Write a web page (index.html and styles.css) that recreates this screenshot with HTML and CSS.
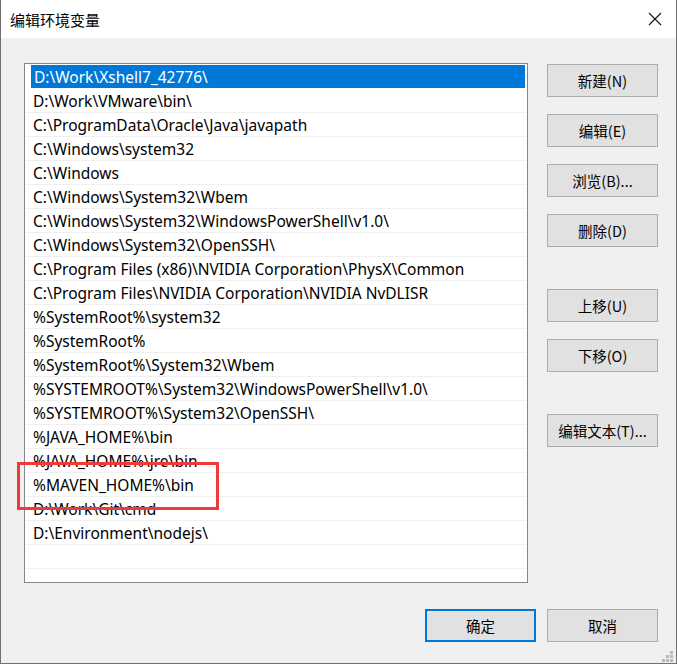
FILE: index.html
```html
<!DOCTYPE html>
<html lang="zh-CN">
<head>
<meta charset="utf-8">
<title>编辑环境变量</title>
<link rel="stylesheet" href="styles.css">
</head>
<body>
<div class="window">
  <div class="titlebar">
    <span class="title">编辑环境变量</span>
    <span class="close">
      <svg width="14" height="14" viewBox="0 0 14 14"><path d="M1 1 L13 13 M13 1 L1 13" stroke="#111" stroke-width="1.1" fill="none"/></svg>
    </span>
  </div>
  <div class="content">
    <div class="main">
      <div class="listbox">
        <div class="row selected">D:\Work\Xshell7_42776\</div>
        <div class="row">D:\Work\VMware\bin\</div>
        <div class="row">C:\ProgramData\Oracle\Java\javapath</div>
        <div class="row">C:\Windows\system32</div>
        <div class="row">C:\Windows</div>
        <div class="row">C:\Windows\System32\Wbem</div>
        <div class="row">C:\Windows\System32\WindowsPowerShell\v1.0\</div>
        <div class="row">C:\Windows\System32\OpenSSH\</div>
        <div class="row">C:\Program Files (x86)\NVIDIA Corporation\PhysX\Common</div>
        <div class="row">C:\Program Files\NVIDIA Corporation\NVIDIA NvDLISR</div>
        <div class="row">%SystemRoot%\system32</div>
        <div class="row">%SystemRoot%</div>
        <div class="row">%SystemRoot%\System32\Wbem</div>
        <div class="row">%SYSTEMROOT%\System32\WindowsPowerShell\v1.0\</div>
        <div class="row">%SYSTEMROOT%\System32\OpenSSH\</div>
        <div class="row">%JAVA_HOME%\bin</div>
        <div class="row">%JAVA_HOME%\jre\bin</div>
        <div class="row">%MAVEN_HOME%\bin</div>
        <div class="row">D:\Work\Git\cmd</div>
        <div class="row">D:\Environment\nodejs\</div>
        <div class="row empty"></div>
        <div class="row empty"></div>
      </div>
      <div class="side">
        <div class="group">
          <button class="btn">新建(N)</button>
          <button class="btn">编辑(E)</button>
          <button class="btn">浏览(B)...</button>
          <button class="btn">删除(D)</button>
        </div>
        <div class="group">
          <button class="btn">上移(U)</button>
          <button class="btn">下移(O)</button>
        </div>
        <div class="group">
          <button class="btn">编辑文本(T)...</button>
        </div>
      </div>
    </div>
    <div class="footer">
      <button class="btn default">确定</button>
      <button class="btn">取消</button>
    </div>
    <div class="grip">
      <i></i><i></i><i></i><i></i><i></i><i></i><i></i><i></i><i></i>
    </div>
  </div>
  <div class="highlight"></div>
</div>
</body>
</html>
```
FILE: styles.css
```css
* { box-sizing: border-box; }
html, body {
  margin: 0;
  padding: 0;
  width: 677px;
  height: 664px;
  overflow: hidden;
  background: #f0f0f0;
}
body {
  font-family: "Noto Sans", "Noto Sans CJK SC", sans-serif;
  font-size: 15px;
  color: #000;
}
.window {
  position: relative;
  width: 677px;
  height: 664px;
  border-left: 1px solid #707070;
  border-right: 1px solid #707070;
  border-bottom: 1px solid #707070;
  display: flex;
  flex-direction: column;
  background: #f0f0f0;
}
.titlebar {
  height: 38px;
  background: #fff;
  display: flex;
  align-items: center;
  justify-content: space-between;
  padding-left: 9px;
  padding-right: 14px;
  flex: none;
}
.title {
  font-family: "Noto Sans CJK SC", sans-serif;
  font-size: 15px;
  line-height: 20px;
  margin-top: 1px;
}
.close { display: flex; }
.content {
  flex: 1;
  position: relative;
  padding: 25px 18px 0 23px;
}
.main {
  display: flex;
}
.listbox {
  width: 504px;
  height: 520px;
  border: 1px solid #828790;
  background: #fff;
  padding: 1px 1px 0 1px;
  overflow: hidden;
}
.row {
  height: 24px;
  line-height: 23px;
  padding-top: 1px;
  padding-left: 7px;
  border-bottom: 1px solid #f0f0f0;
  white-space: nowrap;
  font-size: 15.5px;
  overflow: visible;
}
.row.selected {
  background: #0078d7;
  color: #fff;
  margin: 0 1px 0 5px;
  padding-left: 3px;
  border-bottom-color: #fff;
}
.side {
  margin-left: 19px;
  margin-top: 1px;
  display: flex;
  flex-direction: column;
  gap: 42px;
}
.group {
  display: flex;
  flex-direction: column;
  gap: 17px;
}
.btn {
  width: 111px;
  height: 33px;
  background: #e1e1e1;
  border: 1px solid #adadad;
  font-family: "Noto Sans CJK SC", sans-serif;
  font-size: 14.5px;
  color: #000;
  padding: 0;
  margin: 0;
  line-height: 20px;
}
.footer {
  display: flex;
  justify-content: flex-end;
  gap: 11px;
  margin-top: 26px;
}
.btn.default {
  border: 2px solid #0078d7;
}
.grip {
  position: absolute;
  right: 3px;
  bottom: 1px;
  display: grid;
  grid-template-columns: repeat(3, 3px);
  grid-template-rows: repeat(3, 3px);
  gap: 1px;
}
.grip i { background: #b8b8b8; display: block; }
.grip i:nth-child(1), .grip i:nth-child(2), .grip i:nth-child(4) { background: transparent; }
.highlight {
  position: absolute;
  left: 16px;
  top: 462px;
  width: 202px;
  height: 48px;
  border: 3px solid #f03a3a;
}
```
